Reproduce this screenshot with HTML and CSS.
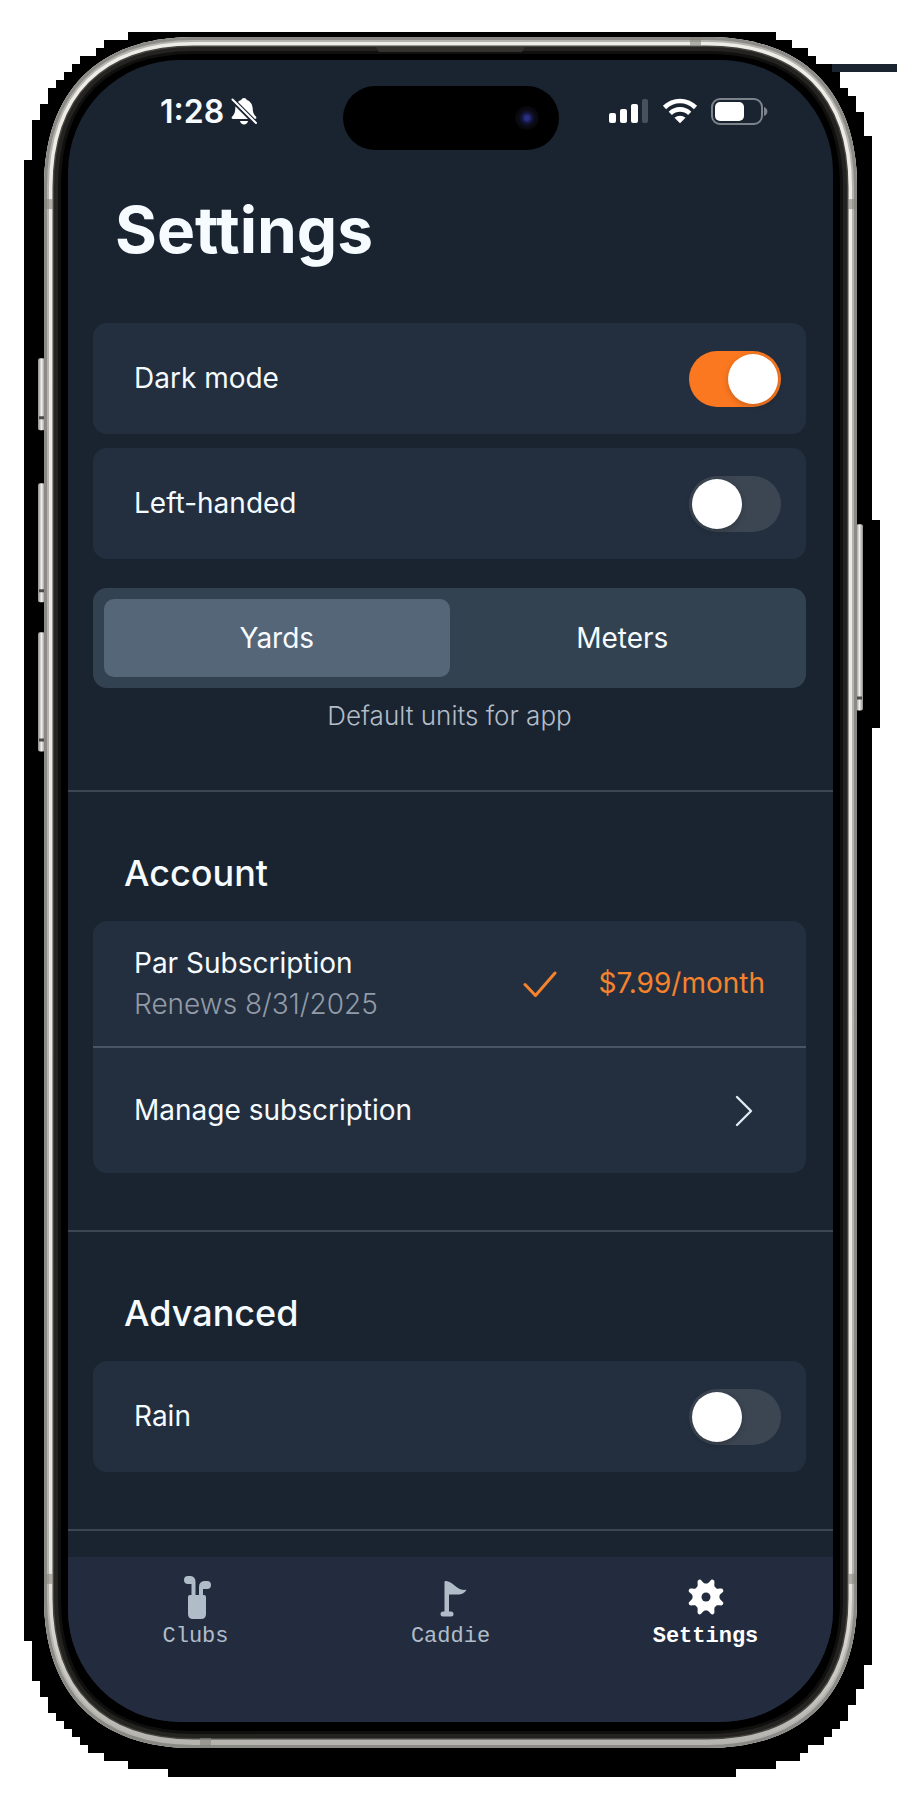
FILE: index.html
```html
<!DOCTYPE html>
<html lang="en">
<head>
<meta charset="utf-8">
<meta name="viewport" content="width=device-width, initial-scale=1">
<title>Settings</title>
<link rel="stylesheet" href="styles.css">
</head>
<body>
<div class="device">
  <svg class="device-art" viewBox="0 0 897 1795" preserveAspectRatio="none" aria-hidden="true">
    <defs>
      <path id="shell" d="M44 187C44 91 98 37 194 37H707C803 37 857 91 857 187V1597C857 1693 803 1747 707 1747H194C98 1747 44 1693 44 1597Z"/>
      <clipPath id="shell-clip"><use href="#shell"/></clipPath>
      <linearGradient id="key" x1="0" x2="1" y1="0" y2="0">
        <stop offset="0" stop-color="#8b8b89"/><stop offset=".5" stop-color="#efeeeb"/><stop offset="1" stop-color="#8b8b89"/>
      </linearGradient>
      <linearGradient id="shine" gradientUnits="userSpaceOnUse" x1="0" x2="0" y1="37" y2="1747">
        <stop offset="0" stop-color="#eeece7"/><stop offset=".9" stop-color="#e6e4df"/><stop offset="1" stop-color="#b5b3ae"/>
      </linearGradient>
    </defs>
    <path fill="#1a2430" d="M832 64H897V72H832Z"/>
    <path shape-rendering="crispEdges" d="M128 32H776V40H792V48H808V56H816V64H832V72H840V88H848V96H856V112H864V136H872V520H880V728H872V1664H864V1688H856V1704H848V1720H840V1728H832V1736H824V1744H808V1752H800V1760H776V1768H736V1776H168V1768H128V1760H104V1752H88V1744H80V1736H72V1728H64V1720H56V1712H48V1696H40V1680H32V1640H24V160H32V120H40V104H48V88H56V80H64V72H72V64H80V56H96V48H104V40H128Z"/>
    <g fill="url(#key)">
      <rect x="38" y="358" width="7" height="72" rx="2"/>
      <rect x="38" y="483" width="7" height="119" rx="2"/>
      <rect x="38" y="632" width="7" height="119" rx="2"/>
      <rect x="856" y="524" width="7" height="186" rx="2"/>
    </g>
    <g fill="#4a4a48">
      <path d="M39 416h5v3h-5zM39 589h5v3h-5zM39 738h5v3h-5zM857 696h5v3h-5z"/>
    </g>
    <g clip-path="url(#shell-clip)" fill="none">
      <use href="#shell" fill="#000"/>
      <use href="#shell" stroke="#10100f" stroke-width="34"/>
      <use href="#shell" stroke="#242321" stroke-width="28"/>
      <use href="#shell" stroke="#45443f" stroke-width="20"/>
      <use href="#shell" stroke="url(#shine)" stroke-width="17"/>
      <use href="#shell" stroke="#b4b3ae" stroke-width="10"/>
      <use href="#shell" stroke="#8b8a86" stroke-width="6"/>
      <g fill="#85857d" opacity=".6">
        <rect x="690" y="37" width="11" height="9"/><rect x="200" y="1737" width="11" height="10"/>
        <rect x="44" y="199" width="9" height="10"/><rect x="848" y="199" width="9" height="10"/>
        <rect x="44" y="1573" width="9" height="10"/><rect x="848" y="1573" width="9" height="10"/>
      </g>
      <path fill="#33322f" d="M376 47H525L522 52H379Z"/>
    </g>
  </svg>

  <div class="screen">
    <header class="status">
      <div class="status-side status-left">
        <span class="time">1:28</span>
        <svg width="26" height="28" viewBox="0 0 26 28" role="img" aria-label="Silent mode">
          <path fill="#fff" d="M13 1C14.400 1 15.400 1.800 15.800 3C19.500 4.200 21.500 7.500 21.700 11.500C21.900 16 23 17.500 25 19.800C25.800 20.800 25.300 22 24 22H2C.7 22 .2 20.800 1 19.800C3 17.500 4.100 16 4.300 11.500C4.500 7.500 6.500 4.200 10.200 3C10.600 1.800 11.600 1 13 1ZM9 24H17C16.600 26.300 15 27.500 13 27.500S9.400 26.300 9 24Z"/>
          <path stroke="#1a2430" stroke-width="5" d="M1 2.500L25 26.500"/>
          <path stroke="#fff" stroke-width="2" stroke-linecap="round" d="M1.500 2.500L25 26"/>
        </svg>
      </div>
      <div class="island"><span class="lens"></span></div>
      <div class="status-side status-right">
        <svg width="40" height="26" viewBox="0 0 40 26" role="img" aria-label="Signal">
          <g fill="#fff"><rect y="15" width="7" height="10" rx="2"/><rect x="11" y="11" width="7" height="14" rx="2"/><rect x="22" y="6" width="7" height="19" rx="2"/></g>
          <rect x="33" y="1" width="6" height="24" rx="2" fill="#48515b"/>
        </svg>
        <svg width="36" height="26" viewBox="0 0 36 26" role="img" aria-label="Wi-Fi">
          <g fill="none" stroke="#fff" stroke-width="4.600"><path d="M2.500 9.500C11.500 .8 24.500 .8 33.500 9.500"/><path d="M8.300 15.300C13.800 10 22.200 10 27.700 15.300"/></g>
          <path fill="#fff" d="M12.500 19.800C15.700 17 20.300 17 23.500 19.800L18 25.300Z"/>
        </svg>
        <svg width="57" height="27" viewBox="0 0 57 27" role="img" aria-label="Battery">
          <rect x="1" y="1" width="50" height="25" rx="8" fill="none" stroke="#7c838b" stroke-width="2"/>
          <rect x="4" y="4" width="29" height="19" rx="5" fill="#fff"/>
          <path fill="#7c838b" d="M53 9C57.500 10.500 57.500 16.500 53 18Z"/>
        </svg>
      </div>
    </header>

    <main>
      <h1 class="title">Settings</h1>

      <section class="group">
        <label class="card row">
          <span>Dark mode</span>
          <input class="switch" type="checkbox" role="switch" checked>
        </label>
        <label class="card row">
          <span>Left-handed</span>
          <input class="switch" type="checkbox" role="switch">
        </label>
        <div class="segment" role="radiogroup" aria-describedby="units-note">
          <label class="option"><input type="radio" name="units" checked><span>Yards</span></label>
          <label class="option"><input type="radio" name="units"><span>Meters</span></label>
        </div>
        <p class="note" id="units-note">Default units for app</p>
      </section>

      <section class="group">
        <h2 class="heading">Account</h2>
        <div class="card">
          <div class="plan">
            <div class="plan-name">
              <p>Par Subscription</p>
              <p class="muted">Renews 8/31/2025</p>
            </div>
            <svg width="34" height="28" viewBox="0 0 34 28" aria-hidden="true"><path fill="none" stroke="#f5822d" stroke-width="3" stroke-linecap="round" stroke-linejoin="round" d="M2 14.500L12.500 25.500L32 3"/></svg>
            <p class="price">$7.99/month</p>
          </div>
          <button class="manage" type="button">
            <span>Manage subscription</span>
            <svg width="18" height="32" viewBox="0 0 18 32" aria-hidden="true"><path fill="none" stroke="#dfe8f3" stroke-width="2.400" stroke-linecap="round" stroke-linejoin="round" d="M2 2L16 16L2 30"/></svg>
          </button>
        </div>
      </section>

      <section class="group">
        <h2 class="heading">Advanced</h2>
        <label class="card row">
          <span>Rain</span>
          <input class="switch" type="checkbox" role="switch">
        </label>
      </section>
    </main>

    <nav class="tabs">
      <a class="tab" href="#clubs">
        <svg width="44" height="44" viewBox="0 0 44 44" aria-hidden="true">
          <g fill="#b1bcc9"><path d="M16 20H30Q32 20 32 22V39Q32 44 27 44H19Q14 44 14 39V22Q14 20 16 20Z"/><path d="M14 1H16.500Q21.500 1.500 21.500 7V21H17.500V9H14A4 4 0 0 1 14 1ZM33 6H30.500Q25 6.500 25 12V21H29V14H33A4 4 0 0 0 33 6Z"/></g>
        </svg>
        <span>Clubs</span>
      </a>
      <a class="tab" href="#caddie">
        <svg width="44" height="44" viewBox="0 0 44 44" aria-hidden="true">
          <g fill="#b1bcc9"><path d="M15.500 7Q15.500 5.500 17.500 6C22 7 24.500 9.500 27.500 12C30.500 14.500 34 15.300 37.500 14.800C35.500 18.500 32.500 19.500 28.500 19.500H20V38H15.500Z"/><rect x="11.500" y="36.500" width="13" height="5" rx="2.500"/></g>
        </svg>
        <span>Caddie</span>
      </a>
      <a class="tab tab-current" href="#settings" aria-current="page">
        <svg width="44" height="44" viewBox="-22 -22 44 44" aria-hidden="true">
          <defs><path id="tooth" d="M-6.500 -10C-4 -12 -3 -14 -2.200 -16.800Q-1.800 -18.600 0 -18.600T2.200 -16.800C3 -14 4 -12 6.500 -10Z"/></defs>
          <g fill="#fff"><circle r="13.500"/>
            <use href="#tooth" transform="rotate(22.500)"/><use href="#tooth" transform="rotate(67.500)"/><use href="#tooth" transform="rotate(112.500)"/><use href="#tooth" transform="rotate(157.500)"/><use href="#tooth" transform="rotate(202.500)"/><use href="#tooth" transform="rotate(247.500)"/><use href="#tooth" transform="rotate(292.500)"/><use href="#tooth" transform="rotate(337.500)"/>
          </g>
          <circle r="4.500" fill="#222c3e"/>
        </svg>
        <span>Settings</span>
      </a>
    </nav>
  </div>
</div>
</body>
</html>
```
FILE: styles.css
```css
* { box-sizing: border-box; }

body {
  margin: 0;
  background: #fff;
  color: #f5fbff;
  font: 400 28px/41px Inter, "Liberation Sans", sans-serif;
}

h1, h2, p { margin: 0; }

.device {
  position: relative;
  padding: 60px 64px 74px 68px;
}

.device-art {
  position: absolute;
  inset: 0;
  width: 100%;
  height: 100%;
}

.screen {
  position: relative;
  overflow: hidden;
  border-radius: 112px;
  background: #1a2430;
}

/* Status bar */
.status {
  display: grid;
  grid-template-columns: 1fr 216px 1fr;
  align-items: start;
  padding-top: 26px;
}

.status-side {
  display: flex;
  align-items: center;
  height: 50px;
}

.status-left { gap: 7px; padding-left: 92px; }
.status-right { gap: 13px; justify-content: flex-end; padding-right: 65px; }

.time { font-size: 32px; font-weight: 600; }

.island {
  display: flex;
  align-items: center;
  justify-content: flex-end;
  height: 64px;
  padding-right: 20px;
  border-radius: 32px;
  background: #000;
}

.lens {
  width: 24px;
  height: 24px;
  border-radius: 50%;
  background: radial-gradient(circle, #2a2f86 0 2px, #14163f 5px, #0b0b17 8px, #060608 12px);
}

/* Content */
.title {
  margin: 42px 0 55px;
  padding: 0 47px;
  font-size: 64px;
  font-weight: 700;
  line-height: 76px;
}

.group {
  padding: 0 27px 57px 25px;
  border-bottom: 2px solid #3b4653;
}

.group + .group { padding-top: 59px; }

.heading {
  margin-bottom: 26px;
  padding: 0 31px;
  font-size: 36px;
  font-weight: 500;
  line-height: 44px;
}

.card {
  border-radius: 14px;
  background: #232f3e;
}

.row {
  display: flex;
  align-items: center;
  justify-content: space-between;
  min-height: 111px;
  padding: 0 25px 0 41px;
}

.row + .row { margin-top: 14px; }

.switch {
  appearance: none;
  display: flex;
  align-items: center;
  width: 92px;
  height: 56px;
  margin: 0;
  padding: 0 3px;
  border-radius: 28px;
  background: #3c4552;
}

.switch::before {
  content: "";
  width: 50px;
  height: 50px;
  border-radius: 50%;
  background: #fff;
  box-shadow: 0 2px 6px rgba(0, 0, 0, 0.2);
}

.switch:checked {
  justify-content: flex-end;
  background: #fb7820;
}

.segment {
  display: grid;
  grid-template-columns: 1fr 1fr;
  height: 100px;
  margin-top: 29px;
  padding: 11px;
  border-radius: 14px;
  background: #334250;
}

.option { display: grid; }

.option input,
.option span { grid-area: 1 / 1; }

.option input {
  appearance: none;
  margin: 0;
  border-radius: 10px;
}

.option input:checked { background: #556678; }

.option span { place-self: center; z-index: 1; }

.note {
  margin-top: 11px;
  color: #b3bcc9;
  font-size: 26px;
  font-weight: 300;
  line-height: 34px;
  text-align: center;
}

.plan,
.manage {
  display: flex;
  align-items: center;
  width: 100%;
  padding: 0 41px;
}

.plan {
  gap: 41px;
  height: 127px;
  border-bottom: 2px solid #4a5563;
}

.plan-name { flex: 1; }
.muted { color: #929ba7; font-weight: 300; }
.price { color: #f5822d; }

.manage {
  justify-content: space-between;
  height: 125px;
  padding-right: 53px;
  border: 0;
  background: none;
  color: inherit;
  font: inherit;
}

/* Tab bar */
.tabs {
  display: grid;
  grid-template-columns: 1fr 1fr 1fr;
  height: 165px;
  margin-top: 26px;
  padding-top: 18px;
  background: #222c3e;
}

.tab {
  display: flex;
  flex-direction: column;
  align-items: center;
  gap: 4px;
  color: #b1bcc9;
  font: 400 22px/28px "Liberation Mono", monospace;
  text-decoration: none;
}

.tab-current { color: #fff; font-weight: 700; }
```
